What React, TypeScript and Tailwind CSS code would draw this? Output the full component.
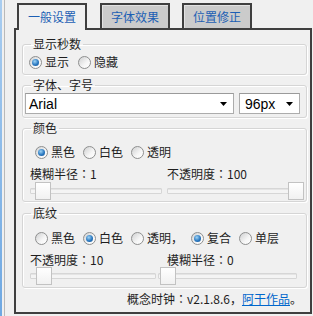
import React from 'react';

const cjk = "font-['Noto_Sans_CJK_SC','Noto_Sans',sans-serif]";

function Colon() {
  return <span className="font-['Noto_Sans_CJK_TC',sans-serif]">：</span>;
}

function Radio({ checked, label }: { checked?: boolean; label: string }) {
  return (
    <label className="flex items-center gap-[3px]">
      <span className="flex h-[13px] w-[13px] items-center justify-center rounded-full border border-[#8e8f8f] bg-[linear-gradient(135deg,#cfd0d1,#f6f6f6_60%,#ffffff)]">
        {checked && (
          <span className="h-[7px] w-[7px] rounded-full bg-[radial-gradient(circle_at_40%_35%,#9fd4f5,#2a78c0_55%,#12508f)]" />
        )}
      </span>
      <span>{label}</span>
    </label>
  );
}

function Slider({ thumbLeft, thumbRight }: { thumbLeft?: number; thumbRight?: boolean }) {
  return (
    <div className="relative h-[18px]">
      <div className="absolute left-0 right-0 top-[6px] h-[6px] rounded-[1px] border border-[#d6d6d6] bg-[#f4f4f4] shadow-[inset_0_1px_0_#e4e4e4]" />
      <div
        className={`absolute top-0 h-[18px] w-[16px] border border-[#c2c2c2] bg-[linear-gradient(#ffffff,#f1f1f1)] ${thumbRight ? 'right-0' : ''}`}
        style={thumbRight ? undefined : { left: thumbLeft }}
      />
    </div>
  );
}

function Select({ value, className }: { value: string; className: string }) {
  return (
    <div className={`flex h-[21px] items-center justify-between border border-[#acacac] border-t-[#9a9a9a] bg-white pl-[3px] pr-[6px] ${className}`}>
      <span className="font-['Liberation_Sans',sans-serif] text-[14px] leading-none text-black">{value}</span>
      <svg width="7" height="4" viewBox="0 0 7 4"><path d="M0 0h7L3.5 4z" fill="#000" /></svg>
    </div>
  );
}

function Group({ title, className, children }: { title: string; className: string; children: React.ReactNode }) {
  return (
    <fieldset className={`mx-[3px] ml-[6px] rounded-[3px] border border-[#d5d5d5] shadow-[inset_1px_1px_0_#ffffff,1px_1px_0_#ffffff] ${className}`}>
      <legend className="ml-[8px] px-[2px] text-[12px] leading-[16px] text-[#1e1e1e]">{title}</legend>
      {children}
    </fieldset>
  );
}

export default function App() {
  return (
    <div className={`flex h-[316px] w-[313px] bg-[#f0f0f0] ${cjk} text-[12px] leading-[16px] text-[#1e1e1e]`}>
      <div className="w-[2px] bg-[linear-gradient(#a9cdf0,#6fa8e2)]" />
      <div className="ml-[2px] w-px bg-[#b9b9b9]" />
      <div className="ml-[9px] flex w-[298px] flex-col pt-[3px]">
        <div className="flex items-start">
          <div className="relative z-10 -mb-[2px] ml-[3px] flex h-[27px] w-[70px] items-start justify-center border-2 border-b-0 border-[#3f3f3f] bg-[#f0f0f0] pt-[4px] text-[#1c5fb4]">
            一般设置
          </div>
          <div className="ml-[13px] flex h-[25px] w-[70px] items-start justify-center border-2 border-b-0 border-[#3f3f3f] bg-[#cbcbcb] pt-[4px] text-[#1c5fb4] shadow-[inset_1px_1px_0_#e2e2e2]">
            字体效果
          </div>
          <div className="ml-[12px] flex h-[25px] w-[70px] items-start justify-center border-2 border-b-0 border-[#3f3f3f] bg-[#cbcbcb] pt-[4px] text-[#1c5fb4] shadow-[inset_1px_1px_0_#e2e2e2]">
            位置修正
          </div>
        </div>
        <div className="flex h-[286px] flex-col border-2 border-[#3f3f3f] bg-[#f0f0f0]">
          <Group title="显示秒数" className="mt-[6px] pb-[4px]">
            <div className="flex gap-[9px] pl-[6px] pt-[2px]">
              <Radio checked label="显示" />
              <Radio label="隐藏" />
            </div>
          </Group>
          <Group title="字体、字号" className="mt-[2px] pb-[3px]">
            <div className="flex gap-[5px] pl-[2px]">
              <Select value="Arial" className="w-[209px]" />
              <Select value="96px" className="w-[61px] pl-[5px]" />
            </div>
          </Group>
          <Group title="颜色" className="mt-[2px] pb-[1px]">
            <div className="pl-[7px] pt-[8px]">
              <div className="ml-[5px] flex gap-[8px]">
                <Radio checked label="黑色" />
                <Radio label="白色" />
                <Radio label="透明" />
              </div>
              <div className="mt-[6px] grid grid-cols-[132px_137px] gap-x-[5px]">
                <div>
                  <div>模糊半径<Colon />1</div>
                  <Slider thumbLeft={5} />
                </div>
                <div>
                  <div>不透明度<Colon />100</div>
                  <Slider thumbRight />
                </div>
              </div>
            </div>
          </Group>
          <Group title="底纹" className="mt-[3px] pb-[2px]">
            <div className="pl-[7px] pt-[9px]">
              <div className="ml-[5px] flex gap-[8px]">
                <Radio label="黑色" />
                <Radio checked label="白色" />
                <Radio label="透明，" />
                <Radio checked label="复合" />
                <Radio label="单层" />
              </div>
              <div className="mt-[6px] grid grid-cols-[126px_139px] gap-x-[2px]">
                <div>
                  <div>不透明度<Colon />10</div>
                  <div className="-mt-[1px]">
                    <Slider thumbLeft={6} />
                  </div>
                </div>
                <div>
                  <div className="pl-[9px]">模糊半径<Colon />0</div>
                  <div className="-mt-[1px]">
                    <Slider thumbLeft={2} />
                  </div>
                </div>
              </div>
            </div>
          </Group>
          <div className="mt-[3px] pr-[8px] text-right">
            概念时钟<Colon />v2.1.8.6，<a className="text-[#0066cc] underline">阿干作品</a>。
          </div>
        </div>
      </div>
    </div>
  );
}
